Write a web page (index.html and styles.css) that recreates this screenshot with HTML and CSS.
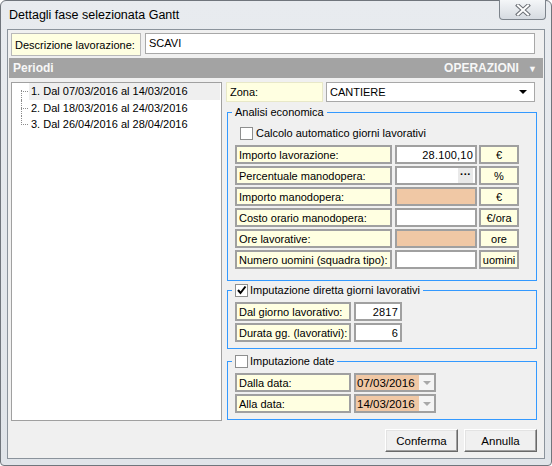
FILE: index.html
```html
<!DOCTYPE html>
<html lang="it">
<head>
    <meta charset="UTF-8">
    <title>Dettagli fase selezionata Gantt</title>
    <link rel="stylesheet" href="styles.css">
</head>
<body>
    <div class="window">
        <div class="titlebar">
            <span class="title">Dettagli fase selezionata Gantt</span>
            <div class="close-btn">
                <svg width="16" height="12" viewBox="0 0 16 12">
                    <path d="M3 1.5 L13 10.5 M13 1.5 L3 10.5" stroke="#6b6f75" stroke-width="4" stroke-linecap="square"/>
                    <path d="M3 1.5 L13 10.5 M13 1.5 L3 10.5" stroke="#ffffff" stroke-width="2" stroke-linecap="square"/>
                </svg>
            </div>
        </div>

        <div class="client">
            <div class="desc-row">
                <div class="cap desc-cap">Descrizione lavorazione:</div>
                <div class="desc-input">SCAVI</div>
            </div>

            <div class="section-bar">
                <span>Periodi</span>
                <span class="ops">OPERAZIONI <span class="ops-arrow">&#9660;</span></span>
            </div>

            <div class="main">
                <div class="tree">
                    <ul>
                        <li class="selected"><span>1. Dal 07/03/2016 al 14/03/2016</span></li>
                        <li><span>2. Dal 18/03/2016 al 24/03/2016</span></li>
                        <li><span>3. Dal 26/04/2016 al 28/04/2016</span></li>
                    </ul>
                </div>

                <div class="side">
                    <div class="zona-row">
                        <div class="cap zona-cap">Zona:</div>
                        <div class="combo">
                            <span>CANTIERE</span>
                            <span class="combo-arrow"></span>
                        </div>
                    </div>

                    <fieldset class="group group-analisi">
                        <legend>Analisi economica</legend>
                        <div class="check-row">
                            <span class="chk"></span>
                            <span>Calcolo automatico giorni lavorativi</span>
                        </div>
                        <div class="frow">
                            <div class="cell lbl">Importo lavorazione:</div>
                            <div class="cell val num">28.100,10</div>
                            <div class="cell unit">€</div>
                        </div>
                        <div class="frow">
                            <div class="cell lbl">Percentuale manodopera:</div>
                            <div class="cell val"><span class="dots">···</span></div>
                            <div class="cell unit">%</div>
                        </div>
                        <div class="frow">
                            <div class="cell lbl">Importo manodopera:</div>
                            <div class="cell val locked"></div>
                            <div class="cell unit">€</div>
                        </div>
                        <div class="frow">
                            <div class="cell lbl">Costo orario manodopera:</div>
                            <div class="cell val"></div>
                            <div class="cell unit">€/ora</div>
                        </div>
                        <div class="frow">
                            <div class="cell lbl">Ore lavorative:</div>
                            <div class="cell val locked"></div>
                            <div class="cell unit">ore</div>
                        </div>
                        <div class="frow">
                            <div class="cell lbl">Numero uomini (squadra tipo):</div>
                            <div class="cell val"></div>
                            <div class="cell unit">uomini</div>
                        </div>
                    </fieldset>

                    <fieldset class="group group-giorni">
                        <legend>
                            <span class="chk checked">
                                <svg width="11" height="11" viewBox="0 0 11 11">
                                    <path d="M2 5 L4.5 8 L9.5 1.5" stroke="#000" stroke-width="2" fill="none"/>
                                </svg>
                            </span>
                            <span>Imputazione diretta giorni lavorativi</span>
                        </legend>
                        <div class="frow">
                            <div class="cell lbl short">Dal giorno lavorativo:</div>
                            <div class="cell val small num">2817</div>
                        </div>
                        <div class="frow">
                            <div class="cell lbl short">Durata gg. (lavorativi):</div>
                            <div class="cell val small num">6</div>
                        </div>
                    </fieldset>

                    <fieldset class="group group-date">
                        <legend>
                            <span class="chk"></span>
                            <span>Imputazione date</span>
                        </legend>
                        <div class="frow">
                            <div class="cell lbl short">Dalla data:</div>
                            <div class="cell date">
                                <span>07/03/2016</span>
                                <span class="date-drop"></span>
                            </div>
                        </div>
                        <div class="frow">
                            <div class="cell lbl short">Alla data:</div>
                            <div class="cell date">
                                <span>14/03/2016</span>
                                <span class="date-drop"></span>
                            </div>
                        </div>
                    </fieldset>
                </div>
            </div>

            <div class="actions">
                <button class="btn">Conferma</button>
                <button class="btn">Annulla</button>
            </div>
        </div>
    </div>
</body>
</html>
```

FILE: styles.css
```css
:root {
    --client-bg: #f0f0f0;
    --caption-bg: #ffffe1;
    --field-border: #a0a0a0;
    --locked-bg: #f0c8a5;
    --group-border: #3399ff;
    --bar-bg: #a3a3a3;
    --text: #000000;
}

* {
    box-sizing: border-box;
}

body {
    margin: 0;
    background: #ffffff;
    font-family: "Liberation Sans", Arial, sans-serif;
    font-size: 11px;
    color: var(--text);
}

/* finestra */
.window {
    width: 552px;
    height: 466px;
    background: linear-gradient(#e8ebef, #e0e4e9);
    border: 1px solid #70757c;
    border-radius: 6px 6px 4px 4px;
    display: flex;
    flex-direction: column;
}

.titlebar {
    height: 28px;
    display: flex;
    justify-content: space-between;
    align-items: flex-start;
}

.title {
    font-size: 12.5px;
    padding: 7px 0 0 8px;
    color: #000;
}

.close-btn {
    width: 47px;
    height: 20px;
    margin: -1px 5px 0 0;
    border: 1px solid #7d848c;
    border-top: none;
    border-radius: 0 0 4px 4px;
    background: linear-gradient(#f4f6f8, #d6dbe1);
    display: flex;
    align-items: center;
    justify-content: center;
}

.client {
    margin: 0 6px 0 6px;
    height: 430px;
    border: 1px solid #8b939c;
    background: var(--client-bg);
    padding: 1px;
    display: flex;
    flex-direction: column;
}

/* descrizione */
.desc-row {
    display: flex;
    margin: 2px 0 0 2px;
    height: 23px;
}

.cap {
    background: var(--caption-bg);
    display: flex;
    align-items: center;
}

.desc-cap {
    width: 130px;
    border: 1px solid #b9b9b9;
    padding-left: 3px;
}

.desc-input {
    width: 390px;
    height: 21px;
    margin-left: 4px;
    background: #fff;
    border: 1px solid #a8a8a8;
    padding: 3px 0 0 3px;
}

.section-bar {
    height: 20px;
    margin-top: 2px;
    background: var(--bar-bg);
    color: #f7f7f7;
    font-weight: bold;
    font-size: 12px;
    display: flex;
    align-items: center;
    justify-content: space-between;
    padding: 0 6px 0 4px;
}

.ops-arrow {
    font-size: 9px;
    margin-left: 6px;
}

/* area principale */
.main {
    display: flex;
    margin: 4px 0 0 2px;
}

.tree {
    width: 211px;
    height: 339px;
    background: #fff;
    border: 1px solid var(--field-border);
}

.tree ul {
    list-style: none;
    margin: 0;
    padding: 0 1px 0 9px;
}

.tree li {
    position: relative;
    padding-left: 8px;
    line-height: 16.5px;
    white-space: nowrap;
}

.tree li::before {
    content: "";
    position: absolute;
    left: 0;
    top: 8px;
    width: 7px;
    border-top: 1px dotted #8c8c8c;
}

.tree li::after {
    content: "";
    position: absolute;
    left: 0;
    top: 0;
    bottom: 0;
    border-left: 1px dotted #8c8c8c;
}

.tree li:first-child::after {
    top: 7px;
}

.tree li:last-child::after {
    bottom: auto;
    height: 9px;
}

.tree li span {
    display: block;
    padding-left: 2px;
}

.tree li.selected span {
    background: #efefef;
}

.side {
    width: 311px;
    margin-left: 4px;
}

.zona-row {
    display: flex;
    height: 20px;
}

.zona-cap {
    width: 97px;
    border: 1px solid #e8e8c8;
    padding-left: 3px;
}

.combo {
    width: 209px;
    margin-left: 3px;
    background: #fff;
    border: 1px solid #a8a8a8;
    display: flex;
    align-items: center;
    justify-content: space-between;
    padding: 0 7px 0 3px;
}

.combo-arrow {
    width: 0;
    height: 0;
    border-left: 4px solid transparent;
    border-right: 4px solid transparent;
    border-top: 4px solid #000;
}

/* gruppi */
.group {
    margin: 3px 0 0 1px;
    width: 310px;
    border: 1px solid var(--group-border);
    padding: 5px 6px 8px 7px;
    min-width: 0;
}

.group legend {
    padding: 0 3px;
    margin-left: -3px;
    line-height: 14px;
    display: flex;
    align-items: center;
    gap: 2px;
}

.group-analisi {
    height: 176px;
    padding-top: 6px;
}

.group-giorni {
    height: 66px;
    margin-top: 2px;
    padding-top: 3px;
}

.group-date {
    height: 66px;
    margin-top: 5px;
    padding-top: 3px;
}

.chk {
    width: 13px;
    height: 13px;
    background: #fff;
    border: 1px solid #8e8f8f;
    display: inline-flex;
    align-items: center;
    justify-content: center;
}

.check-row {
    display: flex;
    align-items: center;
    gap: 3px;
    height: 16px;
    margin: 0 0 4px 5px;
}

.frow {
    display: flex;
    height: 19px;
    margin-top: 2px;
}

.cell {
    border: 2px solid var(--field-border);
    display: flex;
    align-items: center;
}

.lbl {
    width: 157px;
    background: var(--caption-bg);
    padding-left: 2px;
    white-space: nowrap;
}

.lbl.short {
    width: 116px;
}

.val {
    width: 82px;
    margin-left: 3px;
    background: #fff;
    justify-content: flex-end;
    padding-right: 2px;
}

.val.small {
    width: 48px;
}

.num {
    letter-spacing: 0.2px;
}

.val.locked {
    background: var(--locked-bg);
}

.dots {
    background: #e9e9e9;
    font-weight: bold;
    width: 15px;
    height: 15px;
    text-align: center;
    line-height: 12px;
}

.unit {
    width: 40px;
    margin-left: 2px;
    background: var(--caption-bg);
    justify-content: center;
}

.date {
    width: 82px;
    margin-left: 3px;
    background: var(--locked-bg);
    justify-content: space-between;
    padding-left: 1px;
    font-size: 11.5px;
}

.date-drop {
    width: 15px;
    height: 15px;
    background: #f4f4f4;
    position: relative;
}

.date-drop::after {
    content: "";
    position: absolute;
    left: 4px;
    top: 6px;
    border-left: 4px solid transparent;
    border-right: 4px solid transparent;
    border-top: 4px solid #a8a8a8;
}

/* pulsanti */
.actions {
    display: flex;
    justify-content: flex-end;
    gap: 6px;
    margin: 8px 6px 0 0;
}

.btn {
    width: 73px;
    height: 23px;
    font-family: "Liberation Sans", Arial, sans-serif;
    font-size: 11.5px;
    color: #000;
    background: #f0f0f0;
    border: 1px solid;
    border-color: #ffffff #696969 #696969 #ffffff;
    box-shadow: inset -1px -1px 0 #a0a0a0, inset 1px 1px 0 #e3e3e3;
    padding: 0;
}
```
